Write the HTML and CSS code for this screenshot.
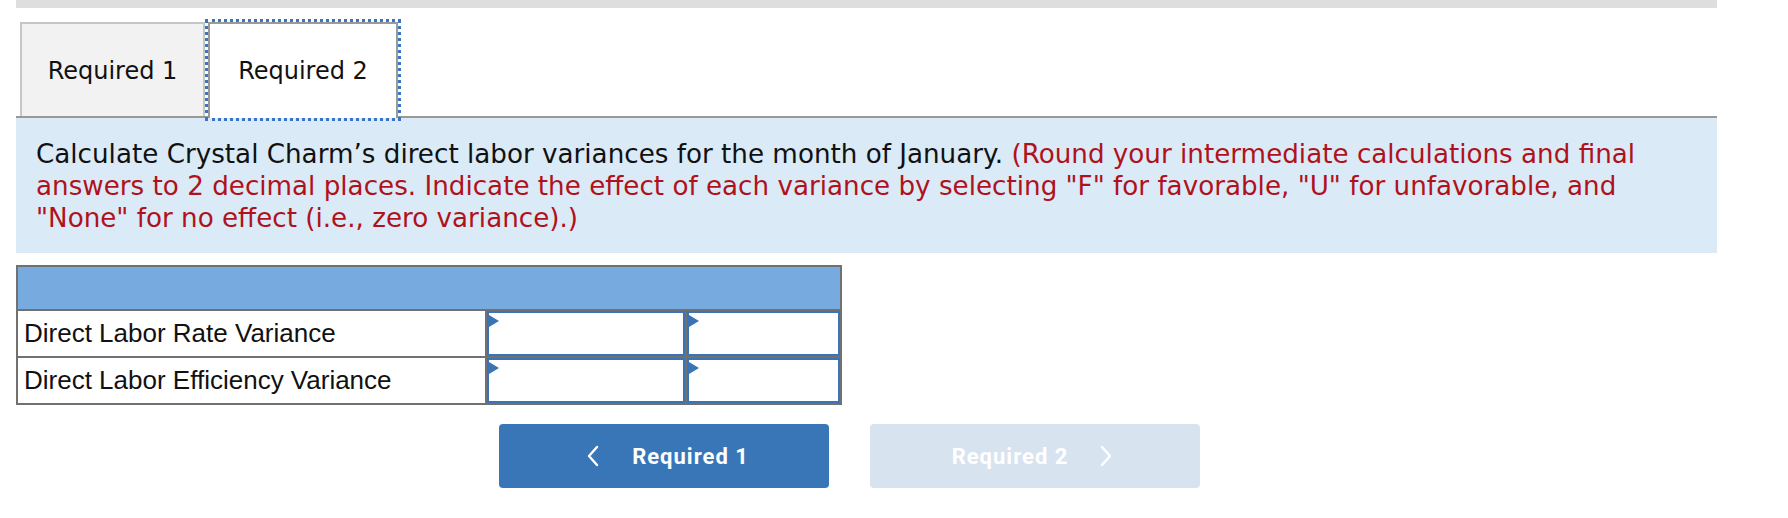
FILE: index.html
```html
<!DOCTYPE html>
<html>
<head>
<meta charset="utf-8">
<link rel="stylesheet" href="styles.css">
</head>
<body>
<div class="page">
  <div class="topbar"></div>
  <div class="tabs">
    <div class="tab tab-inactive">Required 1</div>
    <div class="tab tab-active">Required 2</div>
  </div>
  <div class="panel">
    <p class="question">Calculate Crystal Charm’s direct labor variances for the month of January. <span class="note">(Round your intermediate calculations and final answers to 2 decimal places. Indicate the effect of each variance by selecting "F" for favorable, "U" for unfavorable, and "None" for no effect (i.e., zero variance).)</span></p>
  </div>
  <div class="grid">
    <div class="head"></div>
    <div class="label">Direct Labor Rate Variance</div>
    <div class="input"><span class="flag"></span></div>
    <div class="input"><span class="flag"></span></div>
    <div class="label">Direct Labor Efficiency Variance</div>
    <div class="input"><span class="flag"></span></div>
    <div class="input"><span class="flag"></span></div>
  </div>
  <div class="nav">
    <button class="btn btn-prev"><svg class="chev" width="12" height="22" viewBox="0 0 12 22"><polyline points="10,2 2,11 10,20" fill="none" stroke="#fff" stroke-width="2.4" stroke-linecap="round" stroke-linejoin="round"/></svg><span>Required 1</span></button>
    <button class="btn btn-next"><span>Required 2</span><svg class="chev" width="12" height="22" viewBox="0 0 12 22"><polyline points="2,2 10,11 2,20" fill="none" stroke="#fff" stroke-width="2.4" stroke-linecap="round" stroke-linejoin="round"/></svg></button>
  </div>
</div>
</body>
</html>
```
FILE: styles.css
```css
html, body {
  margin: 0;
  padding: 0;
  background: #ffffff;
}

.page {
  width: 1701px;
  margin-left: 16px;
}

.topbar {
  height: 8px;
  background: #dedede;
}

.tabs {
  display: flex;
  padding-left: 4px;
  margin-top: 14px;
  border-bottom: 2px solid #999999;
  height: 94px;
}

.tab {
  box-sizing: border-box;
  height: 94px;
  display: flex;
  align-items: center;
  justify-content: center;
  font-family: "DejaVu Sans", Verdana, sans-serif;
  font-size: 24px;
  color: #111;
  padding-top: 2px;
}

.tab-inactive {
  width: 185px;
  background: #f2f2f2;
  border: 2px solid #c6c6c6;
  border-bottom: none;
}

.tab-active {
  width: 190px;
  margin-left: 3px;
  background: #ffffff;
  border: 2px solid #9a9a9a;
  border-bottom: none;
  outline: 3px dotted #3a74c2;
  outline-offset: 0;
  height: 96px;
  padding-bottom: 2px;
}

.panel {
  background: #daeaf7;
  padding: 20px 20px 19px 20px;
}

.question {
  margin: 0;
  font-family: "DejaVu Sans", Verdana, sans-serif;
  font-size: 26.2px;
  line-height: 32px;
  color: #111;
  max-width: 1625px;
}

.note {
  color: #b0121b;
}

.grid {
  margin-top: 12px;
  display: grid;
  grid-template-columns: 467px 198px 153px;
  grid-template-rows: 42px 45px 45px;
  gap: 2px;
  width: fit-content;
  background: #717171;
  border: 2px solid #717171;
}

.head {
  grid-column: 1 / 4;
  background: #77abe0;
}

.label {
  background: #ffffff;
  font-family: "Liberation Sans", Arial, sans-serif;
  font-size: 26px;
  color: #111;
  display: flex;
  align-items: center;
  padding-left: 6px;
}

.input {
  position: relative;
  background: #ffffff;
  border: 2px solid #3a73b6;
}

.flag {
  position: absolute;
  left: 0;
  top: 2px;
  width: 0;
  height: 0;
  border-top: 6px solid transparent;
  border-bottom: 6px solid transparent;
  border-left: 10px solid #3a73b6;
}

.nav {
  display: flex;
  gap: 41px;
  margin-top: 19px;
  padding-left: 483px;
}

.btn {
  width: 330px;
  height: 64px;
  border: none;
  border-radius: 4px;
  display: flex;
  align-items: center;
  justify-content: center;
  font-family: Roboto, "Liberation Sans", sans-serif;
  font-weight: 700;
  font-size: 22px;
  letter-spacing: 1px;
  color: #ffffff;
  padding: 0;
}

.btn-prev {
  background: #3876b8;
  gap: 33px;
  padding-left: 8px;
}

.btn-next {
  background: #d8e3f0;
  gap: 32px;
  padding-right: 6px;
}

.chev {
  display: block;
}
```
